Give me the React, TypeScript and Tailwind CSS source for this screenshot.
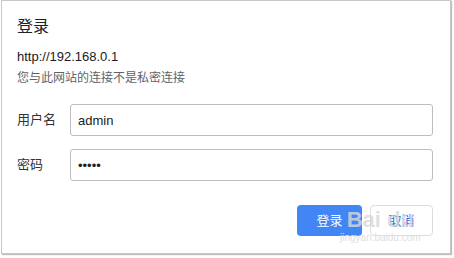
const FONT = { fontFamily: '"Liberation Sans", "Noto Sans CJK SC", sans-serif' };

function Field({ label, type, value }: { label: string; type: string; value: string }) {
  return (
    <div className="flex items-center">
      <span className="w-[53px] text-[13px] text-[#333]">{label}</span>
      <input
        type={type}
        defaultValue={value}
        readOnly
        className="w-[363px] h-[32px] rounded-[3px] border border-[#bdbdbd] px-[7px] text-[13px] text-[#202124] outline-none"
        style={FONT}
      />
    </div>
  );
}

export default function App() {
  return (
    <div className="relative w-[454px] h-[258px] bg-white" style={FONT}>
      <div className="ml-px w-[450px] h-[254px] border border-[#c6c6c6] bg-white pt-4 pl-[15px] pr-[17px] shadow-[1px_1px_1px_rgba(0,0,0,0.25)]">
        <h1 className="text-[16px] leading-[20px] text-[#202124]">登录</h1>
        <p className="mt-[11px] text-[13px] leading-[18px] text-[#202124]">http://192.168.0.1</p>
        <p className="mt-[4px] text-[12px] leading-[16px] text-[#5f6368]">您与此网站的连接不是私密连接</p>

        <div className="mt-[18px] flex flex-col gap-[13px]">
          <Field label="用户名" type="text" value="admin" />
          <Field label="密码" type="password" value="admin" />
        </div>

        <div className="mt-[24px] flex justify-end gap-2">
          <button className="w-[65px] h-[31px] rounded-[4px] bg-[#4285f4] text-[13px] text-white">登录</button>
          <button className="w-[63px] h-[31px] rounded-[4px] border border-[#dadce0] bg-white text-[13px] text-[#1a73e8]">取消</button>
        </div>
      </div>

      <div className="pointer-events-none absolute left-[340px] top-[208px] flex flex-col items-center">
        <span className="text-[22px] font-bold leading-[24px] text-[#d8d8d8] opacity-80">Bai du</span>
        <span className="text-[10px] leading-[12px] text-[#e0e0e0]">jingyan.baidu.com</span>
      </div>
    </div>
  );
}
